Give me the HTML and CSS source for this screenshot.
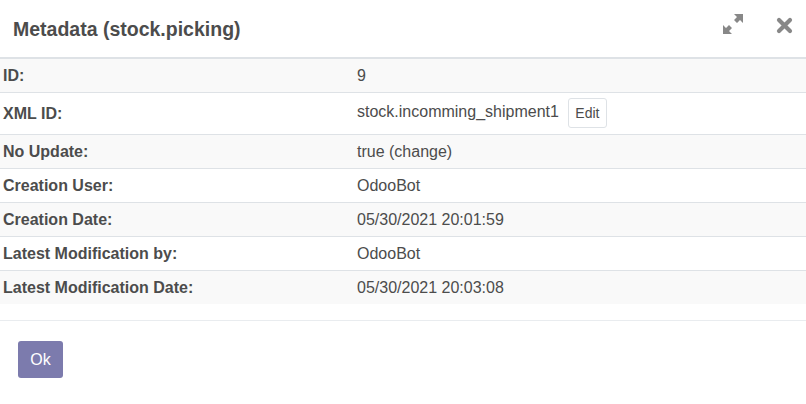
FILE: index.html
```html
<!DOCTYPE html>
<html>
<head>
<meta charset="utf-8">
<link rel="stylesheet" href="styles.css">
</head>
<body>
<div class="modal">
  <header class="modal-header">
    <h4 class="modal-title">Metadata (stock.picking)</h4>
    <div class="header-actions">
      <button class="icon-btn expand" aria-label="Expand">
        <svg width="22" height="22" viewBox="0 0 22 22">
          <g fill="#888">
            <polygon points="12,1 21,1 21,10 18,7 15,10 12,7 15,4"/>
            <polygon points="10,21 1,21 1,12 4,15 7,12 10,15 7,18"/>
          </g>
        </svg>
      </button>
      <button class="icon-btn close" aria-label="Close">
        <svg width="17" height="17" viewBox="0 0 17 17">
          <path d="M3 3 L14 14 M14 3 L3 14" stroke="#888" stroke-width="4.2" stroke-linecap="round"/>
        </svg>
      </button>
    </div>
  </header>
  <main class="modal-body">
    <table class="meta-table">
      <tbody>
        <tr><th>ID:</th><td>9</td></tr>
        <tr class="tall"><th>XML ID:</th><td>stock.incomming_shipment1<button class="btn-edit">Edit</button></td></tr>
        <tr><th>No Update:</th><td>true (change)</td></tr>
        <tr><th>Creation User:</th><td>OdooBot</td></tr>
        <tr><th>Creation Date:</th><td>05/30/2021 20:01:59</td></tr>
        <tr><th>Latest Modification by:</th><td>OdooBot</td></tr>
        <tr><th>Latest Modification Date:</th><td>05/30/2021 20:03:08</td></tr>
      </tbody>
    </table>
  </main>
  <footer class="modal-footer">
    <button class="btn-primary">Ok</button>
  </footer>
</div>
</body>
</html>
```
FILE: styles.css
```css
html, body {
  margin: 0;
  padding: 0;
  background: #fff;
}
body {
  font-family: "Liberation Sans", Arial, sans-serif;
  font-size: 16px;
  color: #4c4c4c;
}
.modal {
  width: 806px;
}
.modal-header {
  height: 58px;
  box-sizing: border-box;
  border-bottom: 1px solid #dee2e6;
  display: flex;
  align-items: center;
  justify-content: space-between;
  padding: 0 13px 0 13px;
}
.modal-title {
  margin: 0;
  font-size: 19.5px;
  font-weight: bold;
  color: #4c4c4c;
  padding-top: 1px;
}
.header-actions {
  display: flex;
  align-items: center;
  gap: 32px;
  margin-top: -6px;
}
.icon-btn {
  border: 0;
  background: none;
  padding: 0;
  display: flex;
}
.icon-btn.expand {
  margin-top: -3px;
}
.meta-table {
  width: 100%;
  border-collapse: collapse;
  margin-bottom: 16px;
}
.meta-table th,
.meta-table td {
  border-top: 1px solid #dee2e6;
  padding: 6px 3px;
  line-height: 21px;
  text-align: left;
  vertical-align: middle;
}
.meta-table th {
  width: 348px;
  font-weight: bold;
}
.meta-table tr:nth-child(odd) {
  background: #f9f9f9;
}
.meta-table tr.tall td,
.meta-table tr.tall th {
  padding-top: 5px;
  padding-bottom: 6px;
}
.btn-edit {
  font-family: inherit;
  font-size: 14px;
  color: #4c4c4c;
  background: #fff;
  border: 1px solid #dee2e6;
  border-radius: 3px;
  height: 30px;
  width: 39px;
  padding: 0;
  margin-left: 9px;
  vertical-align: middle;
}
.modal-footer {
  border-top: 1px solid #e9ecef;
  padding: 20px 18px;
}
.btn-primary {
  font-family: inherit;
  font-size: 16px;
  color: #fff;
  background: #7c7bad;
  border: 0;
  border-radius: 3px;
  width: 45px;
  height: 37px;
  padding: 0;
}
```
